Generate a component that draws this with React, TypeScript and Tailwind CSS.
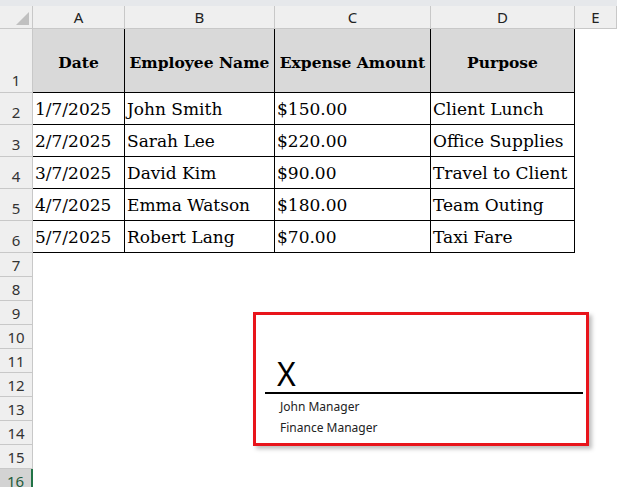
import React from 'react';

const rows = [
    ['1/7/2025', 'John Smith', '$150.00', 'Client Lunch'],
    ['2/7/2025', 'Sarah Lee', '$220.00', 'Office Supplies'],
    ['3/7/2025', 'David Kim', '$90.00', 'Travel to Client'],
    ['4/7/2025', 'Emma Watson', '$180.00', 'Team Outing'],
    ['5/7/2025', 'Robert Lang', '$70.00', 'Taxi Fare'],
];

const headers = ['Date', 'Employee Name', 'Expense Amount', 'Purpose'];
const cols = ['A', 'B', 'C', 'D', 'E'];
const serif = { fontFamily: '"DejaVu Serif", serif' };
const ui = { fontFamily: '"Noto Sans", "Open Sans", sans-serif' };

export default function App() {
    return (
        <div className="relative w-[617px] h-[487px] overflow-hidden bg-white">
            {/* ribbon edge */}
            <div className="h-[6px] bg-[#e6e8eb]" />

            <div className="grid grid-cols-[33px_92px_150px_156px_144px_1fr] grid-rows-[23px_64px_repeat(5,32px)_repeat(10,24px)]">
                {/* column letters */}
                <div className="bg-[#efefef] border-b border-r border-[#c8c8c8] flex items-end justify-end p-[3px]">
                    <div className="w-0 h-0 border-l-[13px] border-l-transparent border-b-[13px] border-b-[#c0c0c0]" />
                </div>
                {cols.map((c) => (
                    <div key={c} style={ui} className="bg-[#efefef] border-b border-r border-[#c8c8c8] flex items-center justify-center text-[15px] text-[#222]">
                        {c}
                    </div>
                ))}

                {/* row 1 */}
                <div style={ui} className="bg-[#efefef] border-b border-r border-[#c8c8c8] flex items-end justify-center pb-[1px] text-[15px] text-[#333]">1</div>
                {headers.map((h) => (
                    <div key={h} style={serif} className="bg-[#d9d9d9] border-b border-r border-black flex items-center justify-center pt-[5px] font-bold text-[15.5px] text-black whitespace-nowrap">
                        {h}
                    </div>
                ))}
                <div className="bg-white" />

                {/* data rows */}
                {rows.map((r, i) => (
                    <React.Fragment key={i}>
                        <div style={ui} className="bg-[#efefef] border-b border-r border-[#c8c8c8] flex items-end justify-center pb-[1px] text-[15px] text-[#333]">{i + 2}</div>
                        {r.map((v, j) => (
                            <div key={j} style={serif} className="border-b border-r border-black flex items-end pl-[2px] pb-[2px] text-[17px] text-black whitespace-nowrap overflow-hidden">
                                {v}
                            </div>
                        ))}
                        <div className="bg-white" />
                    </React.Fragment>
                ))}

                {/* empty rows 7-16 */}
                {Array.from({ length: 10 }, (_, i) => (
                    <React.Fragment key={i}>
                        <div style={ui} className={`border-b border-[#c8c8c8] flex items-end justify-center text-[15px] ${i === 9 ? 'bg-[#d3d3d3] border-r-2 border-r-[#217346] text-[#1f5c3a]' : 'bg-[#efefef] border-r text-[#333]'}`}>
                            {i + 7}
                        </div>
                        <div className="col-span-5 bg-white" />
                    </React.Fragment>
                ))}
            </div>

            {/* signature box overlay */}
            <div className="absolute left-[253px] top-[312px] w-[336px] h-[134px] border-[3px] border-[#e8141b] bg-white shadow-[3px_3px_4px_rgba(0,0,0,0.25)]">
                <div className="flex flex-col h-full">
                    <div className="h-[36px]" />
                    <div style={ui} className="pl-[21px] h-[39px] flex items-end text-[32px] leading-none text-black">X</div>
                    <div className="ml-[9px] mr-[3px] mt-[2px] h-[2px] bg-black" />
                    <div style={ui} className="pl-[24px] pt-[2px] text-[12px] leading-[21px] text-[#222]">
                        <div>John Manager</div>
                        <div>Finance Manager</div>
                    </div>
                </div>
            </div>
        </div>
    );
}
